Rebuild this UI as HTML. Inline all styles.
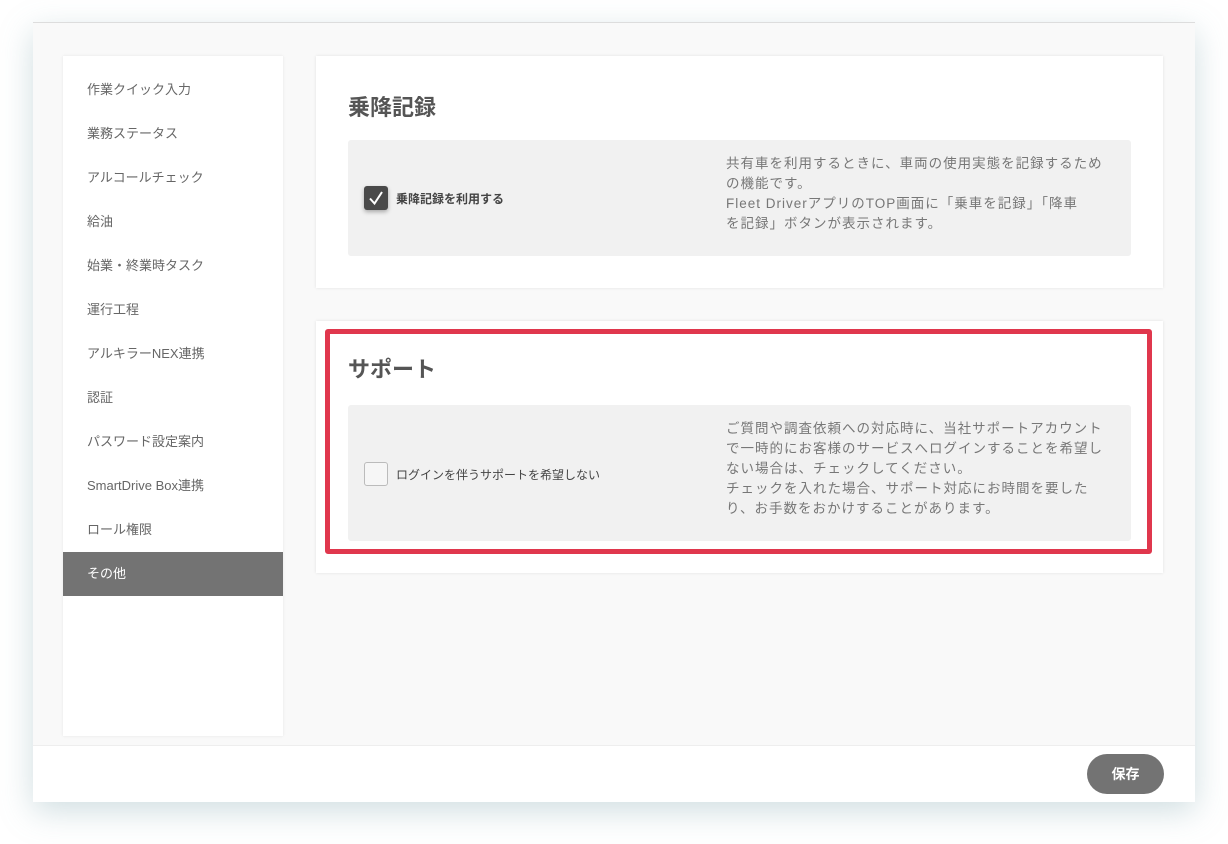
<!DOCTYPE html>
<html><head><meta charset="utf-8"><style>
*{margin:0;padding:0;box-sizing:border-box}
body{width:1228px;height:844px;background:#fff;font-family:"Liberation Sans","Noto Sans CJK JP",sans-serif;color:#555;position:relative;overflow:hidden}
.frame{position:absolute;left:33px;top:22px;width:1162px;height:779px;background:#f9f9f9;border-top:1px solid #ddd;box-shadow:0 10px 30px rgba(120,160,170,.35)}
.side{position:absolute;left:30px;top:33px;width:220px;height:680px;background:#fff;box-shadow:0 0 3px rgba(0,0,0,.08)}
.side div{height:44px;line-height:44px;padding-left:24px;font-size:13px;color:#666}
.side div:first-child{margin-top:12px}
.side .act{background:#737373;color:#fff}
.card{position:absolute;left:283px;width:847px;background:#fff;box-shadow:0 0 3px rgba(0,0,0,.1)}
.card h2{position:absolute;left:32px;font-size:22px;color:#555;font-weight:bold}
.box{position:absolute;left:32px;width:783px;background:#f1f1f1;border-radius:3px}
.cb{position:absolute;left:16px;width:24px;height:24px;border-radius:3px}
.lbl{position:absolute;left:48px;font-size:12px;color:#444}
.desc{position:absolute;left:378px;font-size:13.5px;line-height:20px;color:#777;white-space:nowrap;letter-spacing:1px}
.footer{position:absolute;left:0;top:722px;width:1162px;height:57px;background:#fff;border-top:1px solid #eee}
.btn{position:absolute;left:1054px;top:8px;width:77px;height:40px;border-radius:20px;background:#737373;color:#fff;font-weight:bold;font-size:14px;text-align:center;line-height:40px}
.red{position:absolute;left:292px;top:306px;width:827px;height:225px;border:5px solid #e0374d;border-radius:3px}
</style></head><body>
<div class="frame">
<div class="side">
<div>作業クイック入力</div><div>業務ステータス</div><div>アルコールチェック</div><div>給油</div><div>始業・終業時タスク</div><div>運行工程</div><div>アルキラーNEX連携</div><div>認証</div><div>パスワード設定案内</div><div>SmartDrive Box連携</div><div>ロール権限</div><div class="act">その他</div>
</div>
<div class="card" style="top:33px;height:232px">
<h2 style="top:34px">乗降記録</h2>
<div class="box" style="top:84px;height:116px">
<div class="cb" style="top:46px;background:#4a4a4a;box-shadow:0 2px 4px rgba(0,0,0,.3)"><svg width="24" height="24"><path d="M6 12.5l4.5 5L18 6" stroke="#fff" stroke-width="2" fill="none"/></svg></div>
<div class="lbl" style="top:50px;font-weight:bold">乗降記録を利用する</div>
<div class="desc" style="top:14px">共有車を利用するときに、車両の使用実態を記録するため<br>の機能です。<br>Fleet DriverアプリのTOP画面に「乗車を記録」「降車<br>を記録」ボタンが表示されます。</div>
</div>
</div>
<div class="card" style="top:298px;height:252px">
<h2 style="top:31px">サポート</h2>
<div class="box" style="top:84px;height:136px">
<div class="cb" style="top:57px;border:1px solid #bbb;background:#f6f6f6"></div>
<div class="lbl" style="top:61px">ログインを伴うサポートを希望しない</div>
<div class="desc" style="top:14px">ご質問や調査依頼への対応時に、当社サポートアカウント<br>で一時的にお客様のサービスへログインすることを希望し<br>ない場合は、チェックしてください。<br>チェックを入れた場合、サポート対応にお時間を要した<br>り、お手数をおかけすることがあります。</div>
</div>
</div>
<div class="red"></div>
<div class="footer"><div class="btn">保存</div></div>
</div>
</body></html>
